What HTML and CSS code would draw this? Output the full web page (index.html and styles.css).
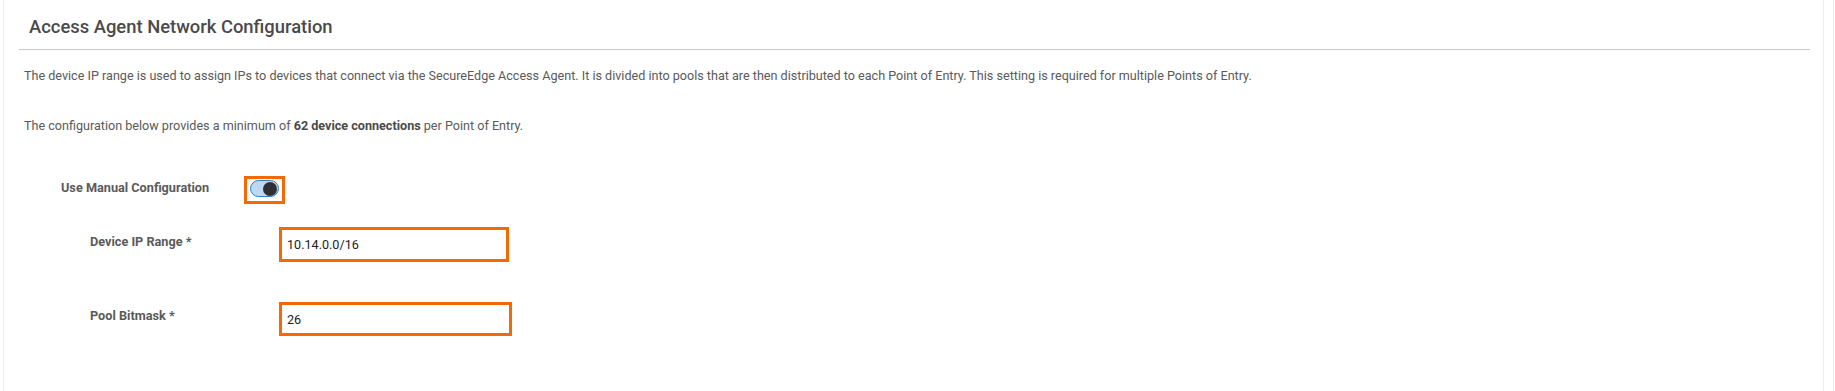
FILE: index.html
```html
<!DOCTYPE html>
<html lang="en">
<head>
<meta charset="utf-8">
<title>Access Agent Network Configuration</title>
<link rel="stylesheet" href="styles.css">
</head>
<body>
<div class="page">
  <section class="panel">
    <header class="panel-header">
      <h2 class="panel-title">Access Agent Network Configuration</h2>
    </header>
    <p class="text text-first">The device IP range is used to assign IPs to devices that connect via the SecureEdge Access Agent. It is divided into pools that are then distributed to each Point of Entry. This setting is required for multiple Points of Entry.</p>
    <p class="text text-second">The configuration below provides a minimum of <strong>62 device connections</strong> per Point of Entry.</p>

    <div class="row row-toggle">
      <label class="label label-main">Use Manual Configuration</label>
      <div class="highlight toggle-box">
        <span class="toggle"><span class="knob"></span></span>
      </div>
    </div>

    <div class="row row-ip">
      <label class="label label-sub">Device IP Range *</label>
      <div class="highlight field field-ip">10.14.0.0/16</div>
    </div>

    <div class="row row-pool">
      <label class="label label-sub">Pool Bitmask *</label>
      <div class="highlight field field-pool">26</div>
    </div>
  </section>
  <div class="gutter"></div>
</div>
</body>
</html>
```

FILE: styles.css
```css
* { box-sizing: border-box; }
html, body { margin: 0; padding: 0; background: #fff; }
body { font-family: Roboto, "Liberation Sans", Arial, sans-serif; color: #5a5a5a; }

.page { display: flex; min-height: 391px; }

.panel {
  flex: 1;
  margin-left: 3px;
  border-left: 1px solid #eeeeee;
  border-right: 1px solid #eeeeee;
  padding: 0 13px 0 15px;
}

.gutter {
  width: 10px;
  margin-right: 1px;
  border-right: 1px solid #ededed;
}

.panel-header {
  padding: 15px 10px 11px;
  border-bottom: 1px solid #c8c8c8;
}

.panel-title {
  margin: 0;
  font-size: 18.4px;
  line-height: 23px;
  font-weight: 500;
  color: #4a4a4a;
}

.text {
  margin: 0;
  padding-left: 5px;
  font-size: 12.6px;
  line-height: 16px;
  color: #5a5a5a;
}
.text strong { font-weight: 700; color: #4a4a4a; }
.text-first { margin-top: 18px; }
.text-second { margin-top: 34px; }

.row { display: flex; align-items: flex-start; }
.row-toggle { margin-top: 42px; padding-left: 42px; }
.row-ip { margin-top: 23px; padding-left: 71px; }
.row-pool { margin-top: 40px; padding-left: 71px; }

.label {
  font-size: 12.7px;
  line-height: 16px;
  font-weight: 700;
  color: #5a5a5a;
}
.label-main { width: 183px; margin-top: 4px; font-size: 12.7px; }
.label-sub { width: 189px; }
.row-ip .label-sub { margin-top: 7px; }
.row-pool .label-sub { margin-top: 6px; }

.highlight { border: 3px solid #f26a07; }

.toggle-box {
  width: 41px;
  height: 28px;
  padding: 1px 3px 0 3px;
}
.toggle {
  display: flex;
  align-items: center;
  justify-content: flex-end;
  width: 29px;
  height: 17px;
  border-radius: 9px;
  background: #bcd8f2;
  border: 1px solid #2b7fd0;
  padding-right: 1px;
}
.knob {
  width: 14px;
  height: 14px;
  border-radius: 50%;
  background: #2f2f33;
}

.field {
  display: flex;
  align-items: center;
  padding-left: 5px;
  font-size: 12.6px;
  color: #222;
}
.field-ip { width: 230px; height: 35px; }
.field-pool { width: 233px; height: 34px; }
```
